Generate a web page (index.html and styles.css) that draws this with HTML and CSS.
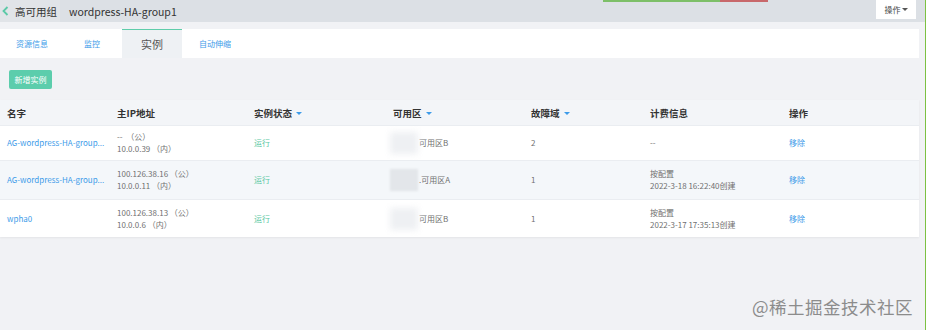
FILE: index.html
```html
<!DOCTYPE html>
<html lang="zh-CN">
<head>
    <meta charset="UTF-8">
    <title>高可用组 - 实例</title>
    <link rel="stylesheet" href="styles.css">
</head>
<body>
    <div class="page">
        <div class="topbar">
            <div class="crumb">
                <svg class="back" width="7" height="10" viewBox="0 0 7 10"><path d="M5.5 1 L1.5 5 L5.5 9" fill="none" stroke="#5cc9a7" stroke-width="1.8"/></svg>
                <span>高可用组</span>
            </div>
            <div class="group-name">wordpress-HA-group1</div>
            <div class="ops-btn">操作<span class="caret"></span></div>
            <div class="progress"><span class="ok"></span><span class="bad"></span></div>
        </div>

        <div class="tabs">
            <a class="tab">资源信息</a>
            <a class="tab">监控</a>
            <a class="tab active">实例</a>
            <a class="tab">自动伸缩</a>
        </div>

        <div class="toolbar">
            <button class="btn-add">新增实例</button>
        </div>

        <div class="table">
            <div class="row head">
                <div>名字</div>
                <div>主IP地址</div>
                <div>实例状态<span class="sort"></span></div>
                <div>可用区<span class="sort"></span></div>
                <div>故障域<span class="sort"></span></div>
                <div>计费信息</div>
                <div>操作</div>
            </div>
            <div class="row first">
                <div class="link">AG-wordpress-HA-group...</div>
                <div><p>--&nbsp;&nbsp;（公）</p><p>10.0.0.39 （内）</p></div>
                <div class="ok-text">运行</div>
                <div class="zone"><span class="blur"></span>可用区B</div>
                <div>2</div>
                <div>--</div>
                <div class="link">移除</div>
            </div>
            <div class="row alt">
                <div class="link">AG-wordpress-HA-group...</div>
                <div><p>100.126.38.16 （公）</p><p>10.0.0.11 （内）</p></div>
                <div class="ok-text">运行</div>
                <div class="zone"><span class="blur gray"></span>.可用区A</div>
                <div>1</div>
                <div><p>按配置</p><p>2022-3-18 16:22:40创建</p></div>
                <div class="link">移除</div>
            </div>
            <div class="row">
                <div class="link">wpha0</div>
                <div><p>100.126.38.13 （公）</p><p>10.0.0.6 （内）</p></div>
                <div class="ok-text">运行</div>
                <div class="zone"><span class="blur"></span>可用区B</div>
                <div>1</div>
                <div><p>按配置</p><p>2022-3-17 17:35:13创建</p></div>
                <div class="link">移除</div>
            </div>
        </div>

        <div class="watermark">@稀土掘金技术社区</div>
    </div>
</body>
</html>
```

FILE: styles.css
```css
body {
    margin: 0;
    font-family: "Noto Sans CJK SC", "Noto Sans", sans-serif;
    background-color: #fff;
    color: #666;
}
.page {
    position: relative;
    width: 925px;
    height: 330px;
    background-color: #f1f2f5;
    border-right: 1px solid #7cc142;
    overflow: hidden;
}
p {
    margin: 0;
}

/* thanh trên cùng */
.topbar {
    position: relative;
    height: 22px;
    display: flex;
    align-items: center;
    background-color: #dce0e5;
}
.crumb {
    display: flex;
    align-items: center;
    gap: 6px;
    height: 22px;
    padding: 0 3px 0 2px;
    background-color: #e1e4e8;
    font-size: 10.5px;
    color: #333;
}
.group-name {
    margin-left: 9px;
    font-size: 10.5px;
    color: #333;
}
.ops-btn {
    margin-left: auto;
    margin-right: 9px;
    align-self: flex-start;
    width: 40px;
    height: 19px;
    background-color: #fff;
    font-size: 8px;
    color: #444;
    display: flex;
    align-items: center;
    justify-content: center;
}
.caret {
    margin-left: 1px;
    border-left: 3px solid transparent;
    border-right: 3px solid transparent;
    border-top: 3px solid #555;
}
.progress {
    position: absolute;
    left: 603px;
    top: 0;
    display: flex;
    height: 2px;
}
.progress .ok {
    width: 117px;
    background-color: #7dbf68;
}
.progress .bad {
    width: 48px;
    background-color: #c8686b;
}

/* tabs */
.tabs {
    margin: 7px 6px 0 0;
    height: 29px;
    background-color: #fff;
    display: flex;
    align-items: stretch;
    padding-left: 16px;
}
.tab {
    font-size: 8px;
    color: #3d9be9;
    display: flex;
    align-items: center;
    margin-right: 36px;
}
.tab.active {
    width: 60px;
    margin-left: -14px;
    margin-right: 17px;
    justify-content: center;
    background-color: #eef1f4;
    border-top: 1px solid #5fcdaa;
    font-size: 11px;
    color: #555;
}

.toolbar {
    display: flex;
    padding: 12px 9px 11px;
}
.btn-add {
    width: 43px;
    height: 19px;
    border: none;
    border-radius: 2px;
    background-color: #5ccdac;
    color: #fff;
    font-family: inherit;
    font-size: 8px;
    padding: 0;
}

/* bảng */
.table {
    margin-right: 6px;
    box-shadow: 0 1px 2px rgba(0, 0, 0, 0.06);
}
.row {
    display: grid;
    grid-template-columns: 110px 137px 139px 138px 119px 139px 1fr;
    padding-left: 7px;
    align-items: center;
    height: 37px;
    background-color: #fff;
    border-top: 1px solid #eaedf1;
    font-size: 8px;
    line-height: 12px;
    color: #707070;
}
.row.head {
    height: 25px;
    border-top: none;
    background-color: #f3f5f8;
    font-size: 9.5px;
    font-weight: bold;
    color: #333;
}
.row.first {
    height: 34px;
}
.row.alt {
    background-color: #f4f7fa;
    height: 38px;
}
.sort {
    display: inline-block;
    margin-left: 4px;
    vertical-align: middle;
    border-left: 3px solid transparent;
    border-right: 3px solid transparent;
    border-top: 3px solid #3d9be9;
}
.link {
    color: #3d9be9;
}
.ok-text {
    color: #5cc9a4;
}
.zone {
    position: relative;
    margin-left: -3px;
    display: flex;
    align-items: center;
}
.blur {
    display: inline-block;
    width: 28px;
    height: 22px;
    margin-right: 1px;
    background-color: #eef0f3;
    filter: blur(3px);
}
.blur.gray {
    background-color: #e3e6ea;
    filter: blur(1px);
}

.watermark {
    position: absolute;
    right: 12px;
    bottom: 11px;
    font-size: 17.5px;
    letter-spacing: 0.5px;
    color: #8c8c8c;
}
```
